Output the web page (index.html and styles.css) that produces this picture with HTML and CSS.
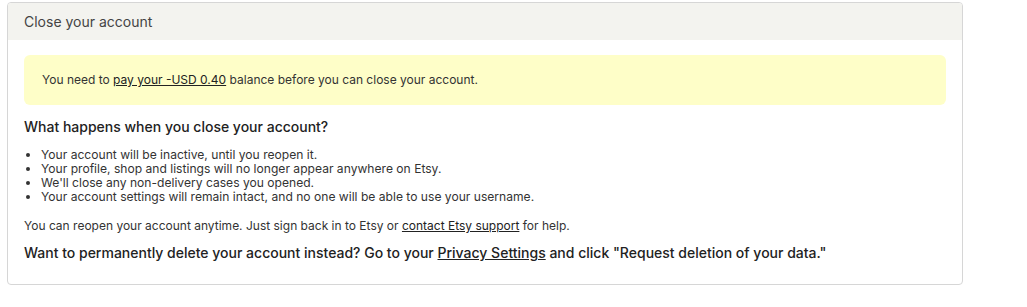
FILE: index.html
```html
<!DOCTYPE html>
<html>
<head>
<meta charset="utf-8">
<link rel="stylesheet" href="styles.css">
</head>
<body>
<div class="card">
  <div class="card-header">Close your account</div>
  <div class="card-body">
    <div class="notice">You need to <a href="#">pay your -USD 0.40</a> balance before you can close your account.</div>
    <h2 class="title">What happens when you close your account?</h2>
    <ul class="list">
      <li>Your account will be inactive, until you reopen it.</li>
      <li>Your profile, shop and listings will no longer appear anywhere on Etsy.</li>
      <li>We'll close any non-delivery cases you opened.</li>
      <li>Your account settings will remain intact, and no one will be able to use your username.</li>
    </ul>
    <p class="reopen">You can reopen your account anytime. Just sign back in to Etsy or <a href="#">contact Etsy support</a> for help.</p>
    <p class="delete">Want to permanently delete your account instead? Go to your <a href="#">Privacy Settings</a> and click "Request deletion of your data."</p>
  </div>
</div>
</body>
</html>
```
FILE: styles.css
```css
html, body { margin: 0; padding: 0; background: #fff; }
body {
  font-family: "Inter", "Liberation Sans", sans-serif;
  color: #222;
  padding: 2px 64px 0 7px;
}
.card {
  border: 1px solid #d6d6d6;
  border-radius: 4px;
  width: 956px;
  height: 283px;
  box-sizing: border-box;
  overflow: hidden;
}
.card-header {
  background: #f3f3ef;
  height: 37px;
  box-sizing: border-box;
  padding: 10px 0 0 16px;
  font-size: 14px;
  color: #444;
}
.card-body { padding: 15px 16px 0 16px; }
.notice {
  background: #fefec8;
  border-radius: 6px;
  height: 50px;
  box-sizing: border-box;
  padding: 17px 18px 0 18px;
  font-size: 12px;
  color: #333;
}
a { color: #222; text-decoration: underline; }
.title {
  margin: 13px 0 0 0;
  font-size: 14px;
  font-weight: 500;
  color: #222;
}
.list {
  margin: 13px 0 0 0;
  padding: 0 0 0 17px;
  font-size: 12.1px;
  line-height: 14px;
  color: #333;
}
.reopen {
  margin: 14px 0 0 0;
  font-size: 12px;
  color: #333;
}
.delete {
  margin: 11px 0 0 0;
  font-size: 14px;
  font-weight: 500;
  color: #222;
}
```
